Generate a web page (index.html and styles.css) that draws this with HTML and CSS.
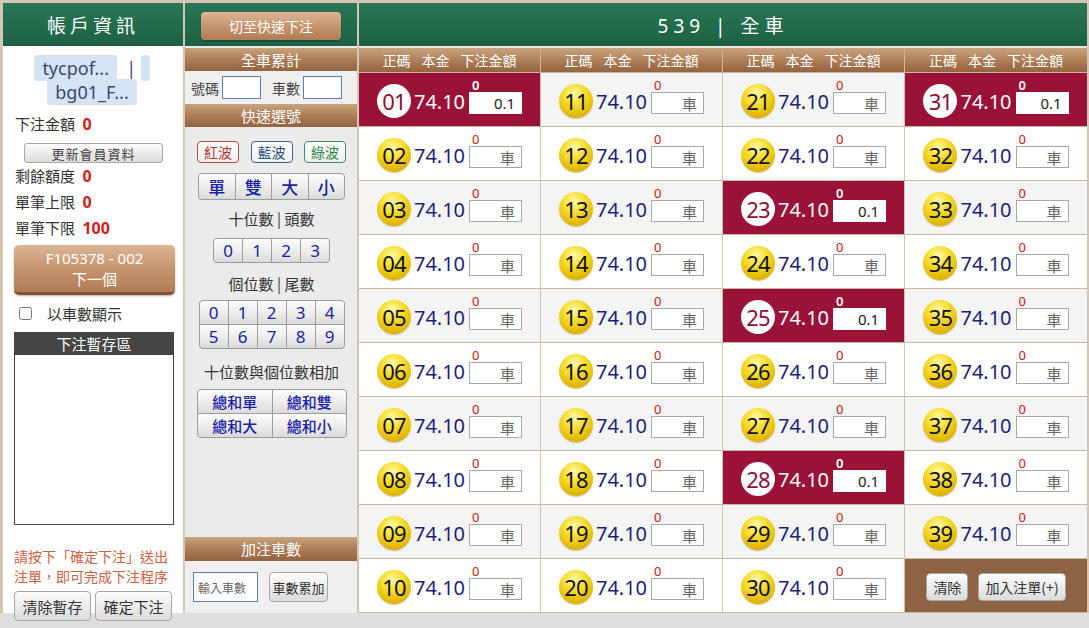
FILE: index.html
```html
<!DOCTYPE html>
<html lang="zh-Hant">
<head>
<meta charset="utf-8">
<title>539 全車</title>
<link rel="stylesheet" href="styles.css">
</head>
<body>
<div class="frame">
  <aside class="left">
    <div class="green-head left-title">帳戶資訊</div>
    <div class="left-body">
      <div class="acct"><span class="hl">tycpof...</span>&nbsp;&nbsp;|&nbsp;<span class="hl hl-sm">&nbsp;</span><br><span class="hl">bg01_F...</span></div>
      <div class="info first">下注金額 <b>0</b></div>
      <button class="btn-gray upd">更新會員資料</button>
      <div class="info">剩餘額度 <b>0</b></div>
      <div class="info">單筆上限 <b>0</b></div>
      <div class="info">單筆下限 <b>100</b></div>
      <button class="btn-brown next">F105378 - 002<br>下一個</button>
      <label class="chk"><input type="checkbox"><span>以車數顯示</span></label>
      <div class="tmp">
        <div class="tmp-head">下注暫存區</div>
        <div class="tmp-body"></div>
      </div>
      <p class="note">請按下「確定下注」送出注單，即可完成下注程序</p>
      <div class="left-btns">
        <button class="btn-gray big">清除暫存</button>
        <button class="btn-gray big">確定下注</button>
      </div>
    </div>
  </aside>

  <section class="mid">
    <div class="green-head mid-top"><button class="btn-brown quick">切至快速下注</button></div>
    <div class="brown-head sub-head first-head">全車累計</div>
    <div class="sum-row">
      <span>號碼</span><input class="box">
      <span class="lbl2">車數</span><input class="box">
    </div>
    <div class="brown-head sub-head">快速選號</div>
    <div class="mid-body">
      <div class="waves">
        <button class="wave red">紅波</button>
        <button class="wave blue">藍波</button>
        <button class="wave green">綠波</button>
      </div>
      <div class="seg seg4 sdbs">
        <button>單</button><button>雙</button><button>大</button><button>小</button>
      </div>
      <div class="cap">十位數 | 頭數</div>
      <div class="seg seg4 tens">
        <button>0</button><button>1</button><button>2</button><button>3</button>
      </div>
      <div class="cap cap2">個位數 | 尾數</div>
      <div class="seg seg5 ones">
        <button>0</button><button>1</button><button>2</button><button>3</button><button>4</button>
        <button>5</button><button>6</button><button>7</button><button>8</button><button>9</button>
      </div>
      <div class="cap cap3">十位數與個位數相加</div>
      <div class="seg seg2 sums">
        <button>總和單</button><button>總和雙</button><button>總和大</button><button>總和小</button>
      </div>
    </div>
    <div class="brown-head sub-head add-head">加注車數</div>
    <div class="add-row">
      <input class="add-in" placeholder="輸入車數">
      <button class="btn-gray add-btn">車數累加</button>
    </div>
  </section>

  <main class="board">
    <div class="green-head board-title">539 | 全車</div>
    <div class="col-heads">
      <div class="ch"><span>正碼</span><span>本金</span><span>下注金額</span></div>
      <div class="ch"><span>正碼</span><span>本金</span><span>下注金額</span></div>
      <div class="ch"><span>正碼</span><span>本金</span><span>下注金額</span></div>
      <div class="ch"><span>正碼</span><span>本金</span><span>下注金額</span></div>
    </div>
    <div class="cells">
      <div class="cell sel"><span class="ball">01</span><span class="odds">74.10</span><span class="bet"><span class="cnt">0</span><input class="amt" value="0.1"></span></div>
      <div class="cell"><span class="ball">11</span><span class="odds">74.10</span><span class="bet"><span class="cnt">0</span><input class="amt" placeholder="車"></span></div>
      <div class="cell"><span class="ball">21</span><span class="odds">74.10</span><span class="bet"><span class="cnt">0</span><input class="amt" placeholder="車"></span></div>
      <div class="cell sel"><span class="ball">31</span><span class="odds">74.10</span><span class="bet"><span class="cnt">0</span><input class="amt" value="0.1"></span></div>

      <div class="cell"><span class="ball">02</span><span class="odds">74.10</span><span class="bet"><span class="cnt">0</span><input class="amt" placeholder="車"></span></div>
      <div class="cell"><span class="ball">12</span><span class="odds">74.10</span><span class="bet"><span class="cnt">0</span><input class="amt" placeholder="車"></span></div>
      <div class="cell"><span class="ball">22</span><span class="odds">74.10</span><span class="bet"><span class="cnt">0</span><input class="amt" placeholder="車"></span></div>
      <div class="cell"><span class="ball">32</span><span class="odds">74.10</span><span class="bet"><span class="cnt">0</span><input class="amt" placeholder="車"></span></div>

      <div class="cell"><span class="ball">03</span><span class="odds">74.10</span><span class="bet"><span class="cnt">0</span><input class="amt" placeholder="車"></span></div>
      <div class="cell"><span class="ball">13</span><span class="odds">74.10</span><span class="bet"><span class="cnt">0</span><input class="amt" placeholder="車"></span></div>
      <div class="cell sel"><span class="ball">23</span><span class="odds">74.10</span><span class="bet"><span class="cnt">0</span><input class="amt" value="0.1"></span></div>
      <div class="cell"><span class="ball">33</span><span class="odds">74.10</span><span class="bet"><span class="cnt">0</span><input class="amt" placeholder="車"></span></div>

      <div class="cell"><span class="ball">04</span><span class="odds">74.10</span><span class="bet"><span class="cnt">0</span><input class="amt" placeholder="車"></span></div>
      <div class="cell"><span class="ball">14</span><span class="odds">74.10</span><span class="bet"><span class="cnt">0</span><input class="amt" placeholder="車"></span></div>
      <div class="cell"><span class="ball">24</span><span class="odds">74.10</span><span class="bet"><span class="cnt">0</span><input class="amt" placeholder="車"></span></div>
      <div class="cell"><span class="ball">34</span><span class="odds">74.10</span><span class="bet"><span class="cnt">0</span><input class="amt" placeholder="車"></span></div>

      <div class="cell"><span class="ball">05</span><span class="odds">74.10</span><span class="bet"><span class="cnt">0</span><input class="amt" placeholder="車"></span></div>
      <div class="cell"><span class="ball">15</span><span class="odds">74.10</span><span class="bet"><span class="cnt">0</span><input class="amt" placeholder="車"></span></div>
      <div class="cell sel"><span class="ball">25</span><span class="odds">74.10</span><span class="bet"><span class="cnt">0</span><input class="amt" value="0.1"></span></div>
      <div class="cell"><span class="ball">35</span><span class="odds">74.10</span><span class="bet"><span class="cnt">0</span><input class="amt" placeholder="車"></span></div>

      <div class="cell"><span class="ball">06</span><span class="odds">74.10</span><span class="bet"><span class="cnt">0</span><input class="amt" placeholder="車"></span></div>
      <div class="cell"><span class="ball">16</span><span class="odds">74.10</span><span class="bet"><span class="cnt">0</span><input class="amt" placeholder="車"></span></div>
      <div class="cell"><span class="ball">26</span><span class="odds">74.10</span><span class="bet"><span class="cnt">0</span><input class="amt" placeholder="車"></span></div>
      <div class="cell"><span class="ball">36</span><span class="odds">74.10</span><span class="bet"><span class="cnt">0</span><input class="amt" placeholder="車"></span></div>

      <div class="cell"><span class="ball">07</span><span class="odds">74.10</span><span class="bet"><span class="cnt">0</span><input class="amt" placeholder="車"></span></div>
      <div class="cell"><span class="ball">17</span><span class="odds">74.10</span><span class="bet"><span class="cnt">0</span><input class="amt" placeholder="車"></span></div>
      <div class="cell"><span class="ball">27</span><span class="odds">74.10</span><span class="bet"><span class="cnt">0</span><input class="amt" placeholder="車"></span></div>
      <div class="cell"><span class="ball">37</span><span class="odds">74.10</span><span class="bet"><span class="cnt">0</span><input class="amt" placeholder="車"></span></div>

      <div class="cell"><span class="ball">08</span><span class="odds">74.10</span><span class="bet"><span class="cnt">0</span><input class="amt" placeholder="車"></span></div>
      <div class="cell"><span class="ball">18</span><span class="odds">74.10</span><span class="bet"><span class="cnt">0</span><input class="amt" placeholder="車"></span></div>
      <div class="cell sel"><span class="ball">28</span><span class="odds">74.10</span><span class="bet"><span class="cnt">0</span><input class="amt" value="0.1"></span></div>
      <div class="cell"><span class="ball">38</span><span class="odds">74.10</span><span class="bet"><span class="cnt">0</span><input class="amt" placeholder="車"></span></div>

      <div class="cell"><span class="ball">09</span><span class="odds">74.10</span><span class="bet"><span class="cnt">0</span><input class="amt" placeholder="車"></span></div>
      <div class="cell"><span class="ball">19</span><span class="odds">74.10</span><span class="bet"><span class="cnt">0</span><input class="amt" placeholder="車"></span></div>
      <div class="cell"><span class="ball">29</span><span class="odds">74.10</span><span class="bet"><span class="cnt">0</span><input class="amt" placeholder="車"></span></div>
      <div class="cell"><span class="ball">39</span><span class="odds">74.10</span><span class="bet"><span class="cnt">0</span><input class="amt" placeholder="車"></span></div>

      <div class="cell"><span class="ball">10</span><span class="odds">74.10</span><span class="bet"><span class="cnt">0</span><input class="amt" placeholder="車"></span></div>
      <div class="cell"><span class="ball">20</span><span class="odds">74.10</span><span class="bet"><span class="cnt">0</span><input class="amt" placeholder="車"></span></div>
      <div class="cell"><span class="ball">30</span><span class="odds">74.10</span><span class="bet"><span class="cnt">0</span><input class="amt" placeholder="車"></span></div>
      <div class="cell actions">
        <button class="btn-gray act">清除</button>
        <button class="btn-gray act">加入注單(+)</button>
      </div>
    </div>
  </main>
</div>
</body>
</html>
```

FILE: styles.css
```css
* { box-sizing: border-box; }
html, body { margin: 0; padding: 0; }
body {
  width: 1089px;
  height: 628px;
  overflow: hidden;
  background: linear-gradient(#cfcfcf, #e8e8e8 30%, #dedede);
  font-family: "Noto Sans CJK TC", "Noto Sans", sans-serif;
  font-size: 14px;
  color: #333;
}
button, input { font-family: inherit; }

.frame {
  display: flex;
  gap: 2px;
  height: 613px;
  padding: 3px 2px 0 3px;
  background: #d3c6b4;
}

.green-head {
  flex: none;
  height: 43px;
  background: linear-gradient(#2b7656, #216a4a 60%, #1d6043);
  color: #fff;
}
.brown-head {
  flex: none;
  background: linear-gradient(#c9a47f, #a97952 55%, #946440);
  color: #fff;
  text-align: center;
}

/* ---------- left ---------- */
.left {
  width: 180px;
  flex: none;
  background: #fff;
  display: flex;
  flex-direction: column;
}
.left-title {
  display: flex;
  align-items: center;
  justify-content: center;
  font-size: 19px;
  letter-spacing: 4px;
}
.left-body {
  flex: none;
  padding: 0 9px 0 11px;
}
.acct {
  margin-top: 10px;
  text-align: center;
  font-family: "Noto Sans", sans-serif;
  font-size: 18px;
  line-height: 24px;
  color: #3b4770;
  padding-right: 4px;
}
.hl {
  background: #d5e3f7;
  padding: 1px 8px;
  border-radius: 3px;
}
.hl-sm { padding: 1px 2px; }
.info {
  font-size: 15px;
  line-height: 26px;
  color: #333;
  padding-left: 1px;
}
.info.first { margin-top: 7px; }
.info b {
  font-family: "Noto Sans", sans-serif;
  color: #d42020;
  font-size: 16px;
  margin-left: 4px;
}
.btn-gray {
  background: linear-gradient(#fdfdfd, #ececec 50%, #dcdcdc);
  border: 1px solid #a7a7a7;
  border-radius: 3px;
  color: #333;
  cursor: pointer;
  padding: 0;
}
.upd {
  display: block;
  width: 139px;
  height: 20px;
  margin: 6px 0 0 10px;
  font-size: 13px;
  color: #444;
  letter-spacing: 1px;
}
.btn-brown {
  background: linear-gradient(#dcb696, #c3916b 55%, #b27c55);
  color: #fff;
  border: none;
  border-radius: 5px;
  cursor: pointer;
}
.next {
  display: block;
  width: 161px;
  height: 50px;
  margin-top: 4px;
  font-family: "Noto Sans", "Noto Sans CJK TC", sans-serif;
  font-size: 15px;
  line-height: 21px;
  border-bottom: 3px solid #845234;
  box-shadow: 0 1px 2px rgba(0,0,0,.3);
}
.chk {
  display: flex;
  align-items: center;
  height: 26px;
  margin-top: 5px;
  font-size: 15px;
  color: #333;
}
.chk input { width: 13px; height: 13px; margin: 0 15px 0 5px; }
.tmp { margin-top: 6px; width: 160px; }
.tmp-head {
  height: 23px;
  background: #454545;
  color: #fff;
  text-align: center;
  font-size: 15px;
  line-height: 23px;
}
.tmp-body {
  height: 170px;
  border: 1px solid #444;
  border-top: none;
  background: #fff;
}
.note {
  margin: 21px 0 0;
  font-size: 14px;
  line-height: 20px;
  color: #d0603f;
}
.left-btns {
  display: flex;
  gap: 4px;
  margin-top: 5px;
}
.btn-gray.big {
  height: 30px;
  width: 77px;
  font-size: 15px;
  border-radius: 4px;
  color: #333;
}

/* ---------- middle ---------- */
.mid {
  width: 172px;
  flex: none;
  background: #ebebeb;
  display: flex;
  flex-direction: column;
}
.mid-top {
  display: flex;
  justify-content: center;
  padding-top: 9px;
}
.quick {
  width: 140px;
  height: 28px;
  font-size: 14px;
  border-radius: 4px;
  box-shadow: 0 1px 2px rgba(0,0,0,.35);
}
.sub-head {
  height: 23px;
  font-size: 15px;
  line-height: 23px;
}
.first-head { margin-top: 2px; }
.sum-row {
  flex: none;
  height: 33px;
  display: flex;
  align-items: center;
  padding-left: 6px;
  font-size: 14px;
  color: #444;
  background: #efefef;
}
.box {
  width: 39px;
  height: 23px;
  margin-left: 3px;
  border: 1px solid #5c7fb4;
  background: #fff;
}
.lbl2 { margin-left: 11px; }
.mid-body {
  flex: 1;
  padding: 0 11px 0 12px;
}
.waves {
  display: flex;
  justify-content: space-between;
  margin-top: 14px;
}
.wave {
  width: 42px;
  height: 22px;
  font-size: 14px;
  border-radius: 4px;
  background: linear-gradient(#ffffff, #f0f0f0);
  padding: 0;
  cursor: pointer;
}
.wave.red { border: 1px solid #b94646; color: #b83434; }
.wave.blue { border: 1px solid #3f6397; color: #2a4d80; }
.wave.green { border: 1px solid #3f8c5c; color: #2c8447; }

.seg {
  display: grid;
  margin: 0 auto;
  border: 1px solid #9d9d9d;
  border-radius: 4px;
  overflow: hidden;
  background: #9d9d9d;
  gap: 1px;
}
.seg button {
  border: none;
  background: linear-gradient(#fbfbfb, #ececec 55%, #dadada);
  color: #1a22a8;
  padding: 0;
  cursor: pointer;
  font-family: "Noto Sans", "Noto Sans CJK TC", sans-serif;
}
.sdbs {
  grid-template-columns: repeat(4, 1fr);
  width: 147px;
  height: 27px;
  margin-top: 10px;
}
.sdbs button { font-size: 17px; font-family: "Noto Sans CJK TC", sans-serif; font-weight: 500; }
.cap {
  text-align: center;
  font-size: 15px;
  line-height: 24px;
  color: #333;
  margin-top: 7px;
}
.cap2 { margin-top: 9px; }
.cap3 { margin-top: 11px; }
.tens {
  grid-template-columns: repeat(4, 1fr);
  width: 117px;
  height: 25px;
  margin-top: 7px;
}
.tens button, .ones button { font-size: 17px; }
.ones {
  grid-template-columns: repeat(5, 1fr);
  width: 146px;
  height: 49px;
  margin-top: 4px;
}
.sums {
  grid-template-columns: 1fr 1fr;
  width: 150px;
  height: 49px;
  margin-top: 5px;
  margin-left: 0;
}
.sums button {
  font-family: "Noto Sans CJK TC", sans-serif;
  font-size: 15px;
  font-weight: 500;
}
.add-head { height: 24px; line-height: 24px; }
.add-row {
  flex: none;
  height: 52px;
  display: flex;
  align-items: center;
  padding-left: 8px;
  gap: 11px;
  background: #efefef;
}
.add-in {
  width: 65px;
  height: 30px;
  border: 1px solid #5c7fb4;
  font-size: 12px;
  padding: 0 4px;
  background: #fff;
}
.add-in::placeholder { color: #666; }
.add-btn {
  width: 59px;
  height: 30px;
  font-size: 13px;
  border-radius: 4px;
}

/* ---------- board ---------- */
.board {
  width: 728px;
  flex: none;
  display: flex;
  flex-direction: column;
  background: #efe7dc;
}
.board-title {
  display: flex;
  align-items: center;
  justify-content: center;
  font-family: "Noto Sans", "Noto Sans CJK TC", sans-serif;
  font-size: 19px;
  letter-spacing: 5px;
}
.col-heads {
  flex: none;
  display: grid;
  grid-template-columns: repeat(4, 1fr);
  margin-top: 2px;
  height: 24px;
  background: linear-gradient(#c9a47f, #a97952 60%, #946440);
}
.ch {
  display: flex;
  justify-content: center;
  align-items: center;
  gap: 11px;
  color: #fff;
  font-size: 14px;
  border-right: 1px solid #d2b797;
}
.ch:last-child { border-right: none; }
.cells {
  display: grid;
  grid-template-columns: repeat(4, 1fr);
  grid-auto-rows: 54px;
  border-top: 1px solid #cdb89e;
}
.cell {
  display: flex;
  align-items: center;
  justify-content: center;
  background: #f4f4f4;
  border-right: 1px solid #d5c1a8;
  border-bottom: 1px solid #cdb89e;
}
.cell:nth-child(4n) { border-right: none; }
.cell:nth-child(8n+5), .cell:nth-child(8n+6), .cell:nth-child(8n+7), .cell:nth-child(8n+8) {
  background: #fff;
}
.ball {
  width: 34px;
  height: 34px;
  border-radius: 50%;
  flex: none;
  text-align: center;
  line-height: 34px;
  font-family: "Noto Sans", sans-serif;
  font-size: 22px;
  color: #111;
  letter-spacing: -1px;
  margin-top: 3px;
  background: radial-gradient(circle at 45% 28%, #fff8b0 0%, #f8e23c 30%, #e6bf06 65%, #c99a00 100%);
  box-shadow: 0 1px 1px rgba(120, 90, 0, .35);
}
.odds {
  font-family: "Noto Sans", sans-serif;
  font-size: 20px;
  color: #1d1d80;
  margin-left: 3px;
  margin-top: 3px;
}
.bet {
  display: flex;
  flex-direction: column;
  margin-left: 4px;
  margin-bottom: 6px;
}
.cnt {
  height: 13px;
  line-height: 13px;
  font-family: "Noto Sans", sans-serif;
  font-size: 13px;
  color: #d01414;
  padding-left: 3px;
}
.amt {
  width: 53px;
  height: 22px;
  border: 1px solid #a8a8a8;
  background: #fff;
  text-align: right;
  padding: 0 6px;
  font-size: 15px;
  color: #222;
}
.amt::placeholder { color: #666; font-size: 15px; }
.cell.sel { background: #9b1239 !important; }
.cell.sel .ball {
  background: #fff;
  color: #8e1034;
  box-shadow: none;
}
.cell.sel .odds { color: #fff; }
.cell.sel .cnt { color: #fff; font-weight: 600; }
.cell.sel .amt { border-color: #fff; font-family: "Noto Sans", sans-serif; }
.cell.actions {
  background: #8e6343 !important;
  gap: 10px;
}
.act {
  height: 28px;
  font-size: 14px;
  border-radius: 4px;
  padding: 0 6px;
  margin-top: 2px;
}
```
